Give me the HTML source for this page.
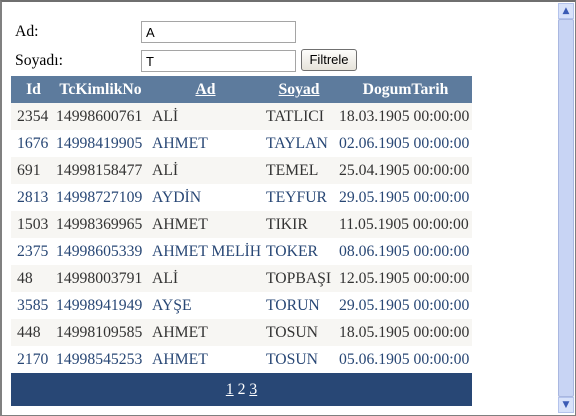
<!DOCTYPE html>
<html><head><meta charset="utf-8"><style>
*{margin:0;padding:0;box-sizing:border-box}
body{width:576px;height:416px;overflow:hidden;background:#fff;font-family:"Liberation Serif",serif;font-size:15.7px;position:relative}
.frame{position:absolute;left:0;top:0;width:576px;height:416px;border:1px solid #7f7f7f;border-top:2px solid #6f6f6f;border-left:2px solid #808080}
.lbl{position:absolute;left:15px;color:#000}
.inp{position:absolute;left:141px;width:155px;height:22px;border:1px solid #a5a5a5;font-family:"Liberation Sans",sans-serif;font-size:13px;padding:3px 0 0 4px}
.btn{position:absolute;left:301px;top:49px;width:56px;height:22px;border:1px solid #707070;border-radius:3px;background:linear-gradient(#fdfdfb,#e6e3da);font-family:"Liberation Sans",sans-serif;font-size:13px;text-align:center;line-height:20px}
table{position:absolute;left:11px;top:76px;border-collapse:collapse;width:461px;table-layout:fixed}
td,th{padding:0;white-space:nowrap;height:27px;overflow:visible}
td:first-child{padding-left:6px}
th{background:#5d7b9d;color:#fff;font-weight:bold;height:27px;text-align:center;padding:0}
th.m{padding-right:7px}
tr.o td{background:#f7f6f3;color:#333}
tr.e td{background:#fff;color:#284775}
tr.f td{background:#284775;color:#fff;text-align:center;height:33px;padding:0}
.sb{position:absolute;left:558px;top:3px;width:16px;height:410px;background:#f3f2ef}
.sb .t{position:absolute;left:0;top:16px;width:16px;height:378px;background:#c8d4f4;border:1px solid #a9b7e0;border-radius:2px}
.sb .a{position:absolute;left:0;width:16px;height:16px;background:#d8e2fa;border:1px solid #b4c3ec;color:#3b5bb5;font-size:9px;text-align:center;line-height:14px;font-family:"DejaVu Sans",sans-serif}
</style></head><body>
<div class="frame"></div>
<div class="lbl" style="top:23px">Ad:</div>
<div class="inp" style="top:21px">A</div>
<div class="lbl" style="top:52px">Soyadı:</div>
<div class="inp" style="top:50px">T</div>
<div class="btn">Filtrele</div>
<table>
<colgroup><col style="width:45px"><col style="width:96px"><col style="width:114px"><col style="width:73px"><col style="width:133px"></colgroup>
<tr><th>Id</th><th class="m">TcKimlikNo</th><th class="m"><u>Ad</u></th><th class="m"><u>Soyad</u></th><th>DogumTarih</th></tr>
<tr class="o"><td>2354</td><td>14998600761</td><td>ALİ</td><td>TATLICI</td><td>18.03.1905 00:00:00</td></tr>
<tr class="e"><td>1676</td><td>14998419905</td><td>AHMET</td><td>TAYLAN</td><td>02.06.1905 00:00:00</td></tr>
<tr class="o"><td>691</td><td>14998158477</td><td>ALİ</td><td>TEMEL</td><td>25.04.1905 00:00:00</td></tr>
<tr class="e"><td>2813</td><td>14998727109</td><td>AYDİN</td><td>TEYFUR</td><td>29.05.1905 00:00:00</td></tr>
<tr class="o"><td>1503</td><td>14998369965</td><td>AHMET</td><td>TIKIR</td><td>11.05.1905 00:00:00</td></tr>
<tr class="e"><td>2375</td><td>14998605339</td><td>AHMET MELİH</td><td>TOKER</td><td>08.06.1905 00:00:00</td></tr>
<tr class="o"><td>48</td><td>14998003791</td><td>ALİ</td><td>TOPBAŞI</td><td>12.05.1905 00:00:00</td></tr>
<tr class="e"><td>3585</td><td>14998941949</td><td>AYŞE</td><td>TORUN</td><td>29.05.1905 00:00:00</td></tr>
<tr class="o"><td>448</td><td>14998109585</td><td>AHMET</td><td>TOSUN</td><td>18.05.1905 00:00:00</td></tr>
<tr class="e"><td>2170</td><td>14998545253</td><td>AHMET</td><td>TOSUN</td><td>05.06.1905 00:00:00</td></tr>
<tr class="f"><td colspan="5"><u>1</u> 2 <u>3</u></td></tr>
</table>
<div class="sb"><div class="a" style="top:0">▲</div><div class="t"></div><div class="a" style="top:394px">▼</div></div>
</body></html>
